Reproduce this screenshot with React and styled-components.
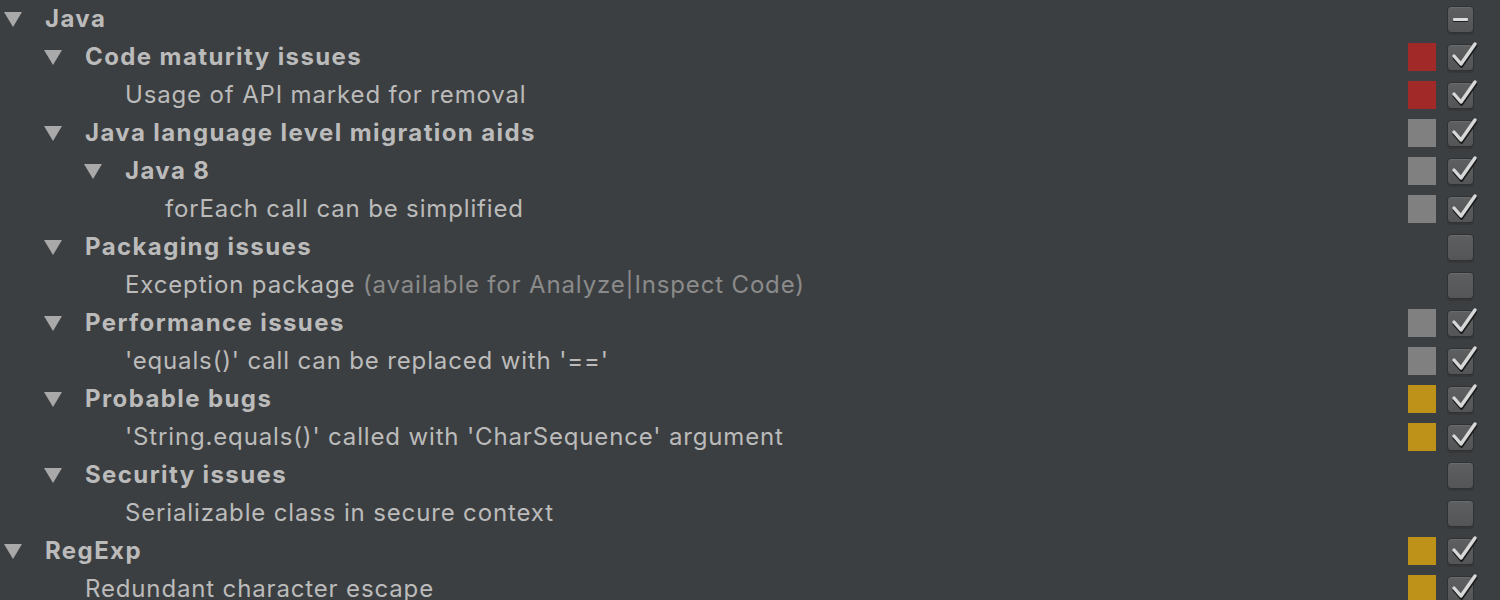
import React from "react";
import styled, { createGlobalStyle } from "styled-components";

const Global = createGlobalStyle`
  html, body { margin: 0; padding: 0; background: #3c3f41; }
  body { font-family: Inter, "Open Sans", "Liberation Sans", sans-serif; overflow: hidden; }
`;

const Tree = styled.div`
  width: 1500px;
  height: 600px;
  background: #3c3f41;
  display: flex;
  flex-direction: column;
  overflow: hidden;
`;

const Row = styled.div`
  display: flex;
  align-items: center;
  height: 38px;
  flex: 0 0 38px;
  padding-left: ${(p) => p.$level * 40 + 4}px;
  padding-right: 26px;
`;

const Toggle = styled.span`
  width: 41px;
  flex: 0 0 41px;
  display: flex;
  align-items: center;
`;

const Arrow = styled.span`
  width: 0;
  height: 0;
  border-left: 9px solid transparent;
  border-right: 9px solid transparent;
  border-top: 15px solid #a9a9a9;
`;

const Label = styled.span`
  flex: 1;
  color: #bbbbbb;
  font-size: 24px;
  line-height: 36px;
  font-weight: ${(p) => (p.$bold ? 700 : 400)};
  white-space: nowrap;
  letter-spacing: ${(p) => (p.$bold ? "1.4px" : "0.85px")};
`;

const Hint = styled.span`
  color: #8b8b8b;
`;

const Severity = styled.span`
  width: 28px;
  height: 28px;
  margin-right: 11px;
  background: ${(p) => p.$color || "transparent"};
`;

const Box = styled.span`
  position: relative;
  width: 25px;
  height: 25px;
  border-radius: 4px;
  border: 1px solid #2f3133;
  background: linear-gradient(#5e5f60, #545556);
  box-shadow: 0 2px 0 #353739, inset 0 1px 0 #6a6b6c;
  display: flex;
  align-items: center;
  justify-content: center;
  overflow: visible;
`;

const Mark = styled.svg`
  position: absolute;
  left: 2px;
  top: -5px;
  overflow: visible;
`;

const Check = () => (
  <Mark width="28" height="28" viewBox="0 0 28 28">
    <path d="M4 16 L11 24 L25 4" fill="none" stroke="#1b1c1d" strokeWidth="3.8" strokeLinecap="round" strokeLinejoin="round" transform="translate(0.5,2)" />
    <path d="M4 16 L11 24 L25 4" fill="none" stroke="#d8d8d8" strokeWidth="3.4" strokeLinecap="round" strokeLinejoin="round" />
  </Mark>
);

const Dash = styled.span`
  width: 15px;
  height: 3px;
  border-radius: 1px;
  background: #dcdcdc;
  box-shadow: 0 1px 0 #1e1f20;
`;

const RED = "#a12a28";
const GRAY = "#808080";
const YEL = "#be9118";

const rows = [
  { level: 0, group: true, text: "Java", state: "partial" },
  { level: 1, group: true, text: "Code maturity issues", sev: RED, state: "on" },
  { level: 2, text: "Usage of API marked for removal", sev: RED, state: "on" },
  { level: 1, group: true, text: "Java language level migration aids", sev: GRAY, state: "on" },
  { level: 2, group: true, text: "Java 8", sev: GRAY, state: "on" },
  { level: 3, text: "forEach call can be simplified", sev: GRAY, state: "on" },
  { level: 1, group: true, text: "Packaging issues", state: "off" },
  { level: 2, text: "Exception package", hint: " (available for Analyze|Inspect Code)", state: "off" },
  { level: 1, group: true, text: "Performance issues", sev: GRAY, state: "on" },
  { level: 2, text: "'equals()' call can be replaced with '=='", sev: GRAY, state: "on" },
  { level: 1, group: true, text: "Probable bugs", sev: YEL, state: "on" },
  { level: 2, text: "'String.equals()' called with 'CharSequence' argument", sev: YEL, state: "on" },
  { level: 1, group: true, text: "Security issues", state: "off" },
  { level: 2, text: "Serializable class in secure context", state: "off" },
  { level: 0, group: true, text: "RegExp", sev: YEL, state: "on" },
  { level: 1, text: "Redundant character escape", sev: YEL, state: "on" },
];

export default function App() {
  return (
    <>
      <Global />
      <Tree>
        {rows.map((r, i) => (
          <Row key={i} $level={r.level}>
            <Toggle>{r.group && <Arrow />}</Toggle>
            <Label $bold={r.group}>
              {r.text}
              {r.hint && <Hint>{r.hint}</Hint>}
            </Label>
            <Severity $color={r.sev} />
            <Box>
              {r.state === "on" && <Check />}
              {r.state === "partial" && <Dash />}
            </Box>
          </Row>
        ))}
      </Tree>
    </>
  );
}
